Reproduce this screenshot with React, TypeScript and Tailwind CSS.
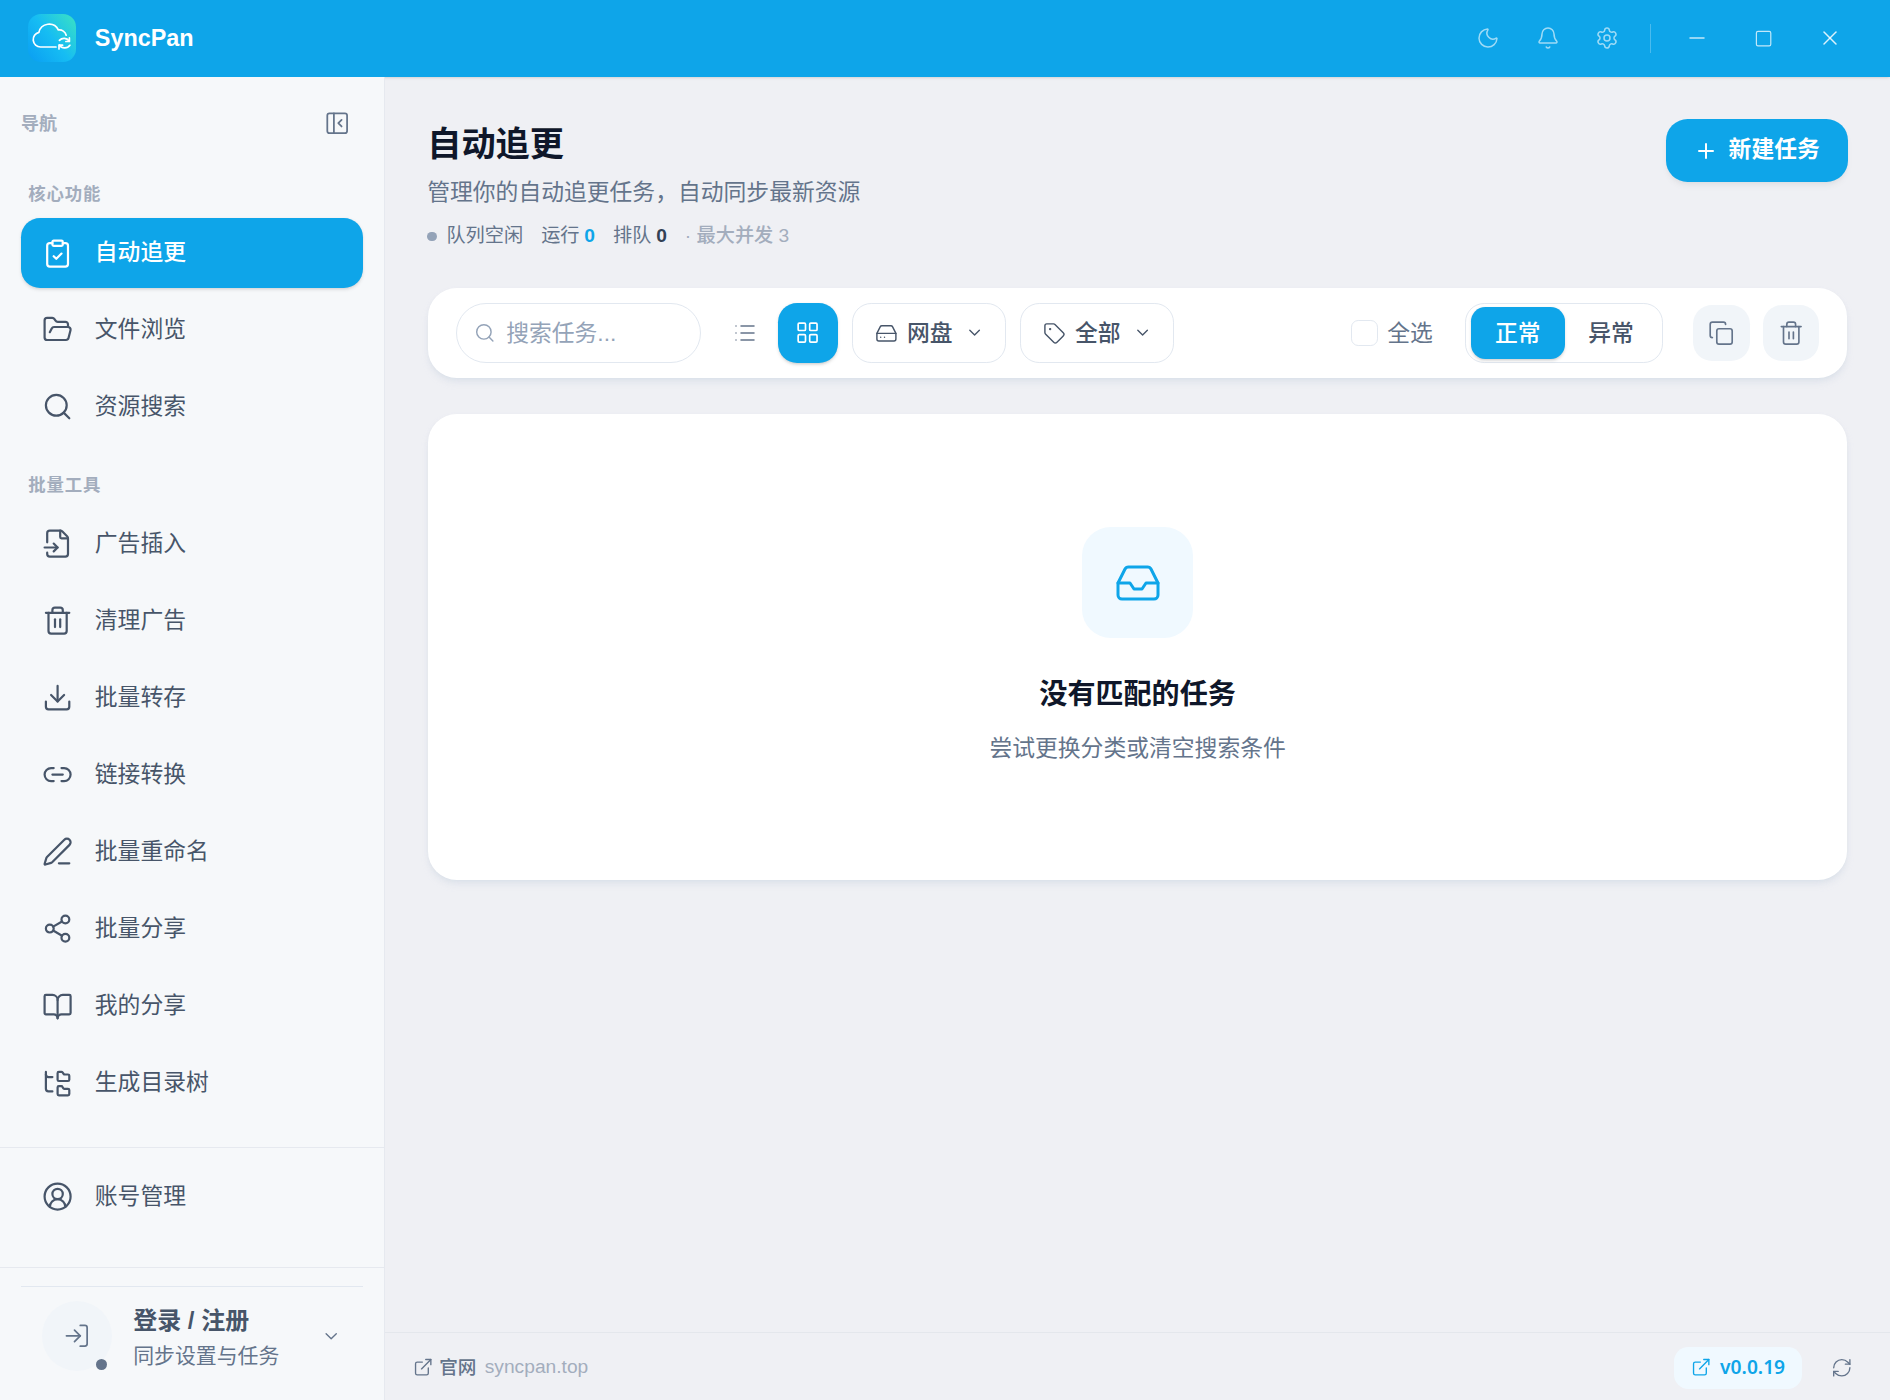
import React from "react";
import {
  ClipboardCheck, FolderOpen, Search, FileInput, Trash2, Download, Link2, PenLine, Share2, BookOpen,
  FolderTree, CircleUserRound, LogIn, ChevronDown, Moon, Bell, Settings, Minus, Square, X, Plus,
  PanelLeftClose, List, LayoutGrid, HardDrive, Tag, Copy, Inbox, ExternalLink, RefreshCw,
} from "lucide-react";

function Logo() {
  return (
    <svg viewBox="0 0 48 48" className="w-10 h-10 shrink-0">
      <defs>
        <linearGradient id="lg" x1="0" y1="1" x2="1" y2="0.2">
          <stop offset="0" stopColor="#0a9df2" />
          <stop offset="0.55" stopColor="#16bdf3" />
          <stop offset="1" stopColor="#35dccb" />
        </linearGradient>
      </defs>
      <rect width="48" height="48" rx="13" fill="url(#lg)" />
      <g fill="none" stroke="#fff" strokeWidth="1.7" strokeLinecap="round" strokeLinejoin="round">
        <path d="M28 33H12.5a7.4 7.4 0 0 1-1.6-14.6A10.4 10.4 0 0 1 30.4 16a7 7 0 0 1 7.8 5.2" />
        <path d="M31.4 26.4a6.3 6.3 0 0 1 9.8 0.6" />
        <path d="M41.9 31.3a6.3 6.3 0 0 1-10.5-0.3" />
        <path d="M41.4 23.9v3.6h-3.5" />
        <path d="M31 35v-3.8h3.6" />
      </g>
    </svg>
  );
}

function NavItem({ icon: Icon, label, active }: { icon: any; label: string; active?: boolean }) {
  return (
    <div
      className={
        active
          ? "flex items-center h-[58px] px-[17.5px] gap-[18px] rounded-2xl bg-[#0ea5e9] text-white font-medium shadow-sm"
          : "flex items-center h-[58px] px-[17.5px] gap-[18px] rounded-2xl text-[#475569]"
      }
    >
      <Icon className="w-[26px] h-[26px] shrink-0" strokeWidth={1.7} />
      <span className="text-[19px] leading-7">{label}</span>
    </div>
  );
}

function Section({ children }: { children: React.ReactNode }) {
  return <div className="px-1.5 h-5 flex items-center text-[14.5px] leading-5 font-semibold tracking-wider text-[#a3adbd]">{children}</div>;
}

export default function App() {
  return (
    <div className="[zoom:1.2] w-[1575px] h-[1166.67px] flex flex-col overflow-hidden bg-[#eff0f4] font-['Liberation_Sans','Noto_Sans_CJK_SC',sans-serif]">
      <header className="h-16 shrink-0 bg-[#0ea5e9] flex items-center pl-[23.5px] pr-[40px] shadow-sm">
        <Logo />
        <span className="ml-[15.5px] text-[19.5px] font-bold text-white">SyncPan</span>
        <div className="ml-auto flex items-center text-white/60">
          <Moon className="w-5 h-5" strokeWidth={1.5} />
          <Bell className="w-5 h-5 ml-[30px]" strokeWidth={1.5} />
          <Settings className="w-5 h-5 ml-[29px]" strokeWidth={1.5} />
          <div className="w-px h-6 bg-white/25 ml-[26px]" />
          <Minus className="w-5 h-5 ml-7 text-white/75" strokeWidth={1.5} />
          <Square className="w-4 h-4 ml-[38px] text-white/75" strokeWidth={1.5} />
          <X className="w-5 h-5 ml-[37px] text-white/85" strokeWidth={1.5} />
        </div>
      </header>

      <div className="flex-1 flex min-h-0">
        <aside className="w-[321px] shrink-0 flex flex-col bg-[#f6f8fa] border-r border-[#e6e9ef]">
          <div className="flex-1 px-[17.5px]">
            <div className="h-5 mt-[30px] flex items-center justify-between pr-[11px]">
              <span className="text-[15px] font-semibold text-[#a3adbd]">导航</span>
              <PanelLeftClose className="w-[22px] h-[22px] -mt-[2px] text-[#64748b]" strokeWidth={1.6} />
            </div>
            <div className="mt-[38px] mb-[10px]"><Section>核心功能</Section></div>
            <div className="flex flex-col gap-1.5">
              <NavItem icon={ClipboardCheck} label="自动追更" active />
              <NavItem icon={FolderOpen} label="文件浏览" />
              <NavItem icon={Search} label="资源搜索" />
            </div>
            <div className="mt-[26px] mb-[10px]"><Section>批量工具</Section></div>
            <div className="flex flex-col gap-[6.25px]">
              <NavItem icon={FileInput} label="广告插入" />
              <NavItem icon={Trash2} label="清理广告" />
              <NavItem icon={Download} label="批量转存" />
              <NavItem icon={Link2} label="链接转换" />
              <NavItem icon={PenLine} label="批量重命名" />
              <NavItem icon={Share2} label="批量分享" />
              <NavItem icon={BookOpen} label="我的分享" />
              <NavItem icon={FolderTree} label="生成目录树" />
            </div>
          </div>
          <div className="h-[100px] shrink-0 border-t border-[#e6e9ef] px-[17.5px] pt-3">
            <NavItem icon={CircleUserRound} label="账号管理" />
          </div>
          <div className="h-[111px] shrink-0 border-t border-[#e6e9ef] px-[17.5px] pt-[15px]">
            <div className="border-t border-[#e2e8f0] pt-3 pl-[17.5px] pr-[18px] flex items-center">
              <div className="relative w-[58px] h-[58px] rounded-full bg-[#f1f5f9] flex items-center justify-center shrink-0">
                <LogIn className="w-[23px] h-[23px] text-[#64748b]" strokeWidth={1.5} />
                <span className="absolute right-[4px] bottom-[1px] w-[9px] h-[9px] rounded-full bg-[#64748b]" />
              </div>
              <div className="ml-[18px] flex-1 pt-[2px]">
                <div className="text-xl font-semibold leading-7 text-[#475569]">登录 / 注册</div>
                <div className="text-[17.4px] leading-6 mt-1 text-[#64748b]">同步设置与任务</div>
              </div>
              <ChevronDown className="w-[17px] h-[17px] text-[#64748b]" strokeWidth={1.6} />
            </div>
          </div>
        </aside>

        <main className="flex-1 flex flex-col min-w-0">
          <div className="flex-1 px-9 pt-[35px]">
            <div className="flex items-start justify-between">
              <div className="-ml-px">
                <h1 className="text-[28.5px] leading-[42px] font-bold text-[#0f172a]">自动追更</h1>
                <p className="mt-1.5 text-[19px] leading-7 text-[#64748b]">管理你的自动追更任务，自动同步最新资源</p>
                <div className="mt-2.5 flex items-center text-base leading-6">
                  <span className="w-2 h-2 rounded-full bg-[#94a3b8] mr-2" />
                  <span className="text-[#64748b]">队列空闲</span>
                  <span className="ml-[15px] text-[#64748b]">运行</span>
                  <span className="ml-1 font-bold text-[#0ea5e9]">0</span>
                  <span className="ml-[15px] text-[#64748b]">排队</span>
                  <span className="ml-1 font-bold text-[#334155]">0</span>
                  <span className="ml-[15px] font-medium text-[#a3adbd]">· 最大并发 3</span>
                </div>
              </div>
              <button className="w-[152px] h-[53px] -mr-px rounded-[18px] bg-[#0ea5e9] text-white flex items-center justify-center gap-[9px] shadow-md shadow-black/5">
                <Plus className="w-5 h-5" strokeWidth={2} />
                <span className="text-[19px] leading-7 -mt-px font-semibold">新建任务</span>
              </button>
            </div>

            <div className="mt-[31px] h-[75px] rounded-3xl bg-white shadow-md shadow-slate-300/40 flex items-center pl-[23px] pr-[23px]">
              <div className="w-[204px] h-[50px] rounded-full border border-[#e2e8f0] flex items-center pl-3.5 gap-[9px] text-[#94a3b8]">
                <Search className="w-[18px] h-[18px]" strokeWidth={1.6} />
                <span className="text-[19px]">搜索任务...</span>
              </div>
              <div className="ml-3 w-[50px] h-[50px] flex items-center justify-center text-[#64748b]">
                <List className="w-5 h-5" strokeWidth={1.5} />
              </div>
              <div className="ml-[2px] w-[50px] h-[50px] rounded-2xl bg-[#0ea5e9] text-white flex items-center justify-center shadow-sm">
                <LayoutGrid className="w-[21px] h-[21px]" strokeWidth={1.6} />
              </div>
              <div className="ml-3 w-[128px] h-[50px] rounded-2xl border border-[#e2e8f0] flex items-center pl-[18px] text-[#475569]">
                <HardDrive className="w-[19px] h-[19px]" strokeWidth={1.5} />
                <span className="ml-2 text-[19px] font-medium">网盘</span>
                <ChevronDown className="ml-2.5 w-4 h-4" strokeWidth={1.7} />
              </div>
              <div className="ml-3 w-[128px] h-[50px] rounded-2xl border border-[#e2e8f0] flex items-center pl-[18px] text-[#475569]">
                <Tag className="w-[19px] h-[19px]" strokeWidth={1.5} />
                <span className="ml-2 text-[19px] font-medium">全部</span>
                <ChevronDown className="ml-2.5 w-4 h-4" strokeWidth={1.7} />
              </div>
              <div className="ml-auto flex items-center">
                <span className="w-[22px] h-[22px] rounded-md border border-[#e2e8f0] bg-white" />
                <span className="ml-2 text-[19px] text-[#64748b]">全选</span>
              </div>
              <div className="ml-[27px] w-[165px] h-[50px] rounded-2xl border border-[#e2e8f0] p-1 flex items-center">
                <div className="w-[78px] h-[43px] rounded-xl bg-[#0ea5e9] text-white flex items-center justify-center text-[19px] font-medium shadow-sm">正常</div>
                <div className="flex-1 flex items-center justify-center text-[19px] font-medium text-[#475569]">异常</div>
              </div>
              <div className="ml-[25px] w-[47px] h-[47px] rounded-2xl bg-[#f1f5f9] flex items-center justify-center text-[#64748b]">
                <Copy className="w-[22px] h-[22px]" strokeWidth={1.5} />
              </div>
              <div className="ml-[11px] w-[47px] h-[47px] rounded-2xl bg-[#f1f5f9] flex items-center justify-center text-[#64748b]">
                <Trash2 className="w-[22px] h-[22px]" strokeWidth={1.5} />
              </div>
            </div>

            <div className="mt-[30px] h-[388px] rounded-[24px] bg-white shadow-md shadow-slate-300/40 flex flex-col items-center pt-[94px]">
              <div className="w-[93px] h-[93px] rounded-3xl bg-[#f0f9ff] flex items-center justify-center">
                <Inbox className="w-10 h-10 text-[#0ea5e9]" strokeWidth={1.5} />
              </div>
              <div className="mt-[29px] text-[23.4px] leading-9 font-bold text-[#0f172a]">没有匹配的任务</div>
              <div className="mt-[13px] text-[19px] leading-7 text-[#64748b]">尝试更换分类或清空搜索条件</div>
            </div>
          </div>

          <footer className="h-[57px] shrink-0 border-t border-[#e4e7ec] flex items-center pt-[2px] pl-[23px] pr-[31px]">
            <ExternalLink className="w-[17px] h-[17px] text-[#64748b]" strokeWidth={1.6} />
            <span className="ml-[5px] text-[15.5px] font-medium text-[#64748b]">官网</span>
            <span className="ml-[7px] text-base text-[#a3adbd]">syncpan.top</span>
            <div className="ml-auto w-[107px] h-[35px] rounded-xl bg-[#f0f9ff] flex items-center justify-center gap-[7px] text-[#0ea5e9]">
              <ExternalLink className="w-[17px] h-[17px]" strokeWidth={1.6} />
              <span className="text-base font-semibold font-['Noto_Sans']">v0.0.19</span>
            </div>
            <RefreshCw className="ml-6 w-[18px] h-[18px] text-[#64748b]" strokeWidth={1.5} />
          </footer>
        </main>
      </div>
    </div>
  );
}
